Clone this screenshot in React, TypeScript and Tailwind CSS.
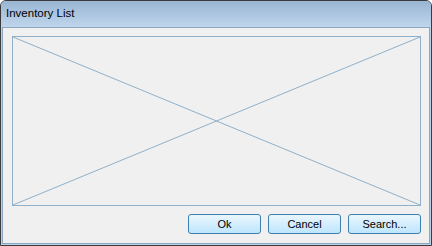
import React from 'react';

function Button({ label }: { label: string }) {
  return (
    <button className="w-[73px] h-[20px] rounded-[3px] border border-[#3c7fb1] bg-gradient-to-b from-[#eaf6fd] to-[#bee6fd] text-[11px] leading-none text-black">
      {label}
    </button>
  );
}

export default function App() {
  return (
    <div
      className="w-[432px] h-[246px] overflow-hidden rounded-t-[6px] border border-[#3b3b3b] bg-[#bcd2e8] flex flex-col"
      style={{ fontFamily: '"Liberation Sans", Arial, sans-serif' }}
    >
      <div className="h-[26px] shrink-0 bg-gradient-to-b from-[#9ab6d4] to-[#bfd5eb] flex items-center pl-[5px] text-[11.5px] text-black">
        Inventory List
      </div>
      <div className="flex-1 mx-[1px] mb-[1px] border border-[#8aa6c1] bg-[#f0f0f0] flex flex-col pl-[9px] pr-[8px] pt-[8px] pb-[9px]">
        <div className="h-[170px] shrink-0 border border-[#8fb0c8] relative">
          <svg className="absolute inset-0 w-full h-full" viewBox="0 0 100 100" preserveAspectRatio="none">
            <line x1="0" y1="0" x2="100" y2="100" stroke="#8fb0c8" strokeWidth="1" vectorEffect="non-scaling-stroke" />
            <line x1="100" y1="0" x2="0" y2="100" stroke="#8fb0c8" strokeWidth="1" vectorEffect="non-scaling-stroke" />
          </svg>
        </div>
        <div className="flex justify-end gap-[7px] mt-[8px]">
          <Button label="Ok" />
          <Button label="Cancel" />
          <Button label="Search..." />
        </div>
      </div>
    </div>
  );
}
